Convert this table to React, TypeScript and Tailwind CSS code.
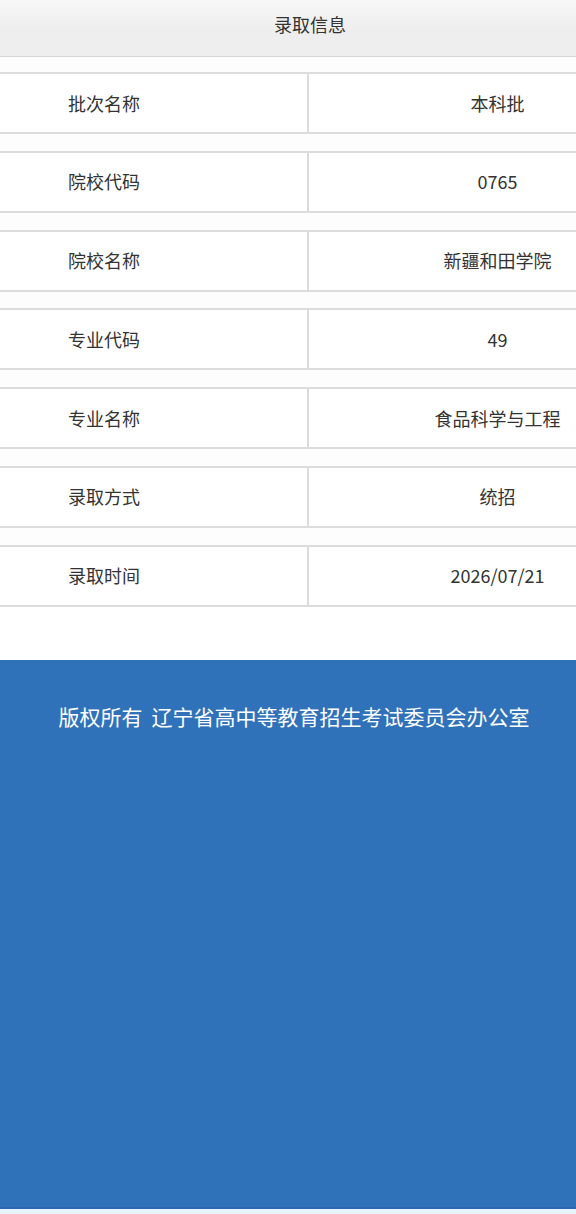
import React from 'react';

const rows: [string, string][] = [
  ['批次名称', '本科批'],
  ['院校代码', '0765'],
  ['院校名称', '新疆和田学院'],
  ['专业代码', '49'],
  ['专业名称', '食品科学与工程'],
  ['录取方式', '统招'],
  ['录取时间', '2026/07/21'],
];

export default function App() {
  return (
    <div
      className="w-[576px] h-[1214px] overflow-hidden bg-white flex flex-col text-[#333333]"
      style={{ fontFamily: '"Noto Sans CJK SC", "Noto Sans", sans-serif' }}
    >
      {/* header */}
      <div className="h-[57px] shrink-0 bg-gradient-to-b from-[#f7f7f7] via-[#eeeeee] to-[#eeeeee] border-b border-[#d6d6d6] flex items-center justify-center pl-[44px] pb-[7px] text-[18px]">
        录取信息
      </div>

      <div className="flex flex-col gap-[16.8px] pt-[15px] bg-[#fdfdfd]">
        {rows.map(([label, value]) => (
          <div
            key={label}
            className="h-[62px] flex border-y-2 border-[#dcdcdc] bg-white text-[18px]"
          >
            <div className="w-[309px] shrink-0 border-r-2 border-[#dcdcdc] flex items-center pl-[68px]">
              {label}
            </div>
            <div className="flex-1 flex items-center justify-center pl-[110px] whitespace-nowrap">
              {value}
            </div>
          </div>
        ))}
      </div>

      <div className="h-[53px] shrink-0" />

      {/* footer */}
      <div className="flex-1 bg-[#3072b9] border-b-2 border-[#2f66b0] flex justify-center pt-[41px] pl-[12px] text-white text-[21px]">
        <span className="h-fit">
          版权所有<span className="inline-block w-[9px]" />辽宁省高中等教育招生考试委员会办公室
        </span>
      </div>
      <div className="h-[5px] shrink-0 bg-[#e6f4fb]" />
    </div>
  );
}
